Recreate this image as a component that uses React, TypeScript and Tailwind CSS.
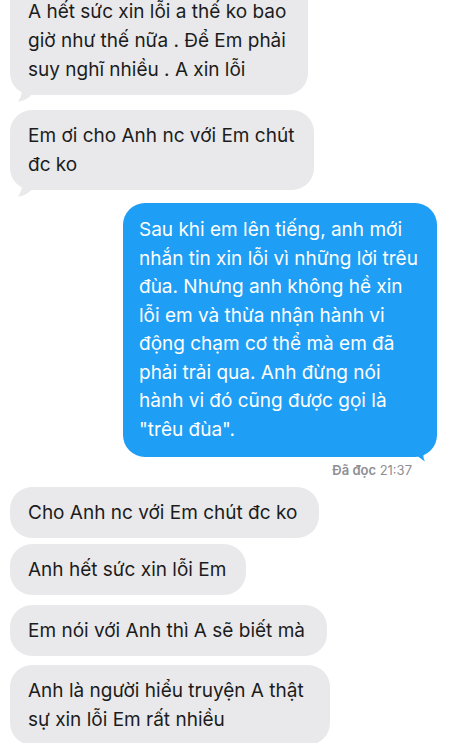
import React from "react";

const GrayTail = () => (
  <svg
    className="absolute -bottom-[7px] left-[7px]"
    width="20"
    height="12"
    viewBox="0 0 20 12"
  >
    <path d="M5 0 C5 5 3 9 1 11.5 C7 11 12 8 15 4 L20 0 Z" fill="#e9e9eb" />
  </svg>
);

const BlueTail = () => (
  <svg
    className="absolute -bottom-[5px] right-[9px]"
    width="16"
    height="10"
    viewBox="0 0 16 10"
  >
    <path d="M0 0 C4 3 8 6 13 9.5 C11 6 11 3 12 0 Z" fill="#1e9ef4" />
  </svg>
);

type GrayProps = {
  width: string;
  className?: string;
  tail?: boolean;
  children: React.ReactNode;
};

const Gray = ({ width, className = "", tail, children }: GrayProps) => (
  <div
    className={`relative self-start whitespace-nowrap rounded-[22px] bg-[#e9e9eb] pl-[18px] pr-2 py-[11px] text-[19px] leading-[29px] text-[#1c1c1c] ${width} ${className}`}
  >
    {children}
    {tail && <GrayTail />}
  </div>
);

export default function App() {
  return (
    <div
      className="flex h-[743px] w-[450px] flex-col overflow-hidden bg-white px-[10px]"
      style={{ fontFamily: "Inter, 'Noto Sans', sans-serif" }}
    >
      <Gray width="w-[298px]" className="-mt-[14px] rounded-t-none" tail>
        A hết sức xin lỗi a thế ko bao
        <br />
        giờ như thế nữa . Để Em phải
        <br />
        suy nghĩ nhiều . A xin lỗi
      </Gray>

      <Gray width="w-[304px]" className="mt-[15px]" tail>
        Em ơi cho Anh nc với Em chút
        <br />
        đc ko
      </Gray>

      <div className="relative mr-[3px] mt-[13px] w-[314px] self-end whitespace-nowrap rounded-[22px] bg-[#1e9ef4] py-[13px] pl-[16px] pr-2 text-[19px] leading-[28.5px] text-white">
        Sau khi em lên tiếng, anh mới
        <br />
        nhắn tin xin lỗi vì những lời trêu
        <br />
        đùa. Nhưng anh không hề xin
        <br />
        lỗi em và thừa nhận hành vi
        <br />
        động chạm cơ thể mà em đã
        <br />
        phải trải qua. Anh đừng nói
        <br />
        hành vi đó cũng được gọi là
        <br />
        "trêu đùa".
        <BlueTail />
      </div>

      <div className="mr-[28px] mt-[5px] self-end text-[13px] leading-[16px] text-[#8e8e93]">
        <span className="font-semibold">Đã đọc</span> 21:37
      </div>

      <Gray width="w-[309px]" className="mt-[9px]">
        Cho Anh nc với Em chút đc ko
      </Gray>

      <Gray width="w-[236px]" className="mt-[6px]">
        Anh hết sức xin lỗi Em
      </Gray>

      <Gray width="w-[317px]" className="mt-[10px]">
        Em nói với Anh thì A sẽ biết mà
      </Gray>

      <Gray width="w-[320px]" className="mt-[9px]">
        Anh là người hiểu truyện A thật
        <br />
        sự xin lỗi Em rất nhiều
      </Gray>
    </div>
  );
}
